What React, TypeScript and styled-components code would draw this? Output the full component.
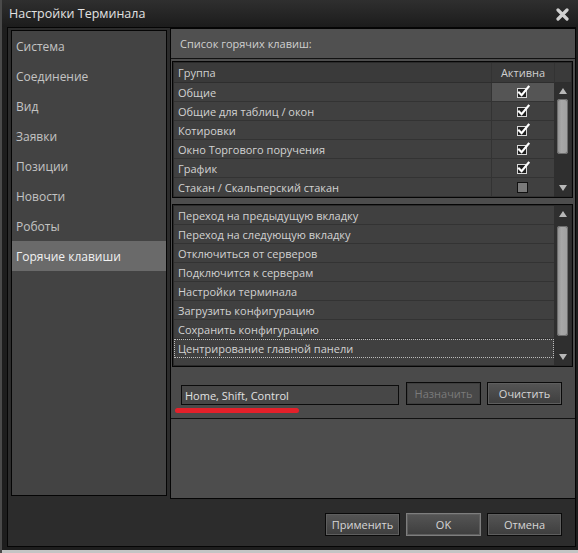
import React from "react";
import styled, { createGlobalStyle } from "styled-components";

const Global = createGlobalStyle`
  html, body { margin: 0; padding: 0; background: #bdbdbd; }
  body { font-family: "Open Sans", "Liberation Sans", sans-serif; }
  * { box-sizing: border-box; }
`;

const Window = styled.div`
  width: 578px;
  height: 553px;
  background: #1d1d1d;
  border-left: 2px solid #4a4a4a;
  display: flex;
  flex-direction: column;
  overflow: hidden;
`;

const TitleBar = styled.div`
  height: 27px;
  flex: none;
  display: flex;
  align-items: center;
  justify-content: space-between;
  padding: 0 9px 0 7px;
  background: linear-gradient(#2f2f2f, #1c1c1c);
  color: #e2e2e2;
  font-size: 12.5px;
`;

const CloseIcon = styled.svg`
  width: 13px;
  height: 13px;
  margin-top: 1px;
`;

const Frame = styled.div`
  height: 520px;
  flex: none;
  margin: 0 2px 0 5px;
  border: 1px solid #050505;
  background: #2c2c2c;
  display: flex;
  flex-direction: column;
`;

const BottomGap = styled.div`
  height: 3px;
  flex: none;
`;

const BottomStrip = styled.div`
  height: 3px;
  flex: none;
  background: #c4c4c4;
  margin-left: -2px;
`;

const Body = styled.div`
  height: 471px;
  flex: none;
  display: flex;
  gap: 3px;
  padding-left: 3px;
`;

const Sidebar = styled.div`
  width: 156px;
  height: 466px;
  margin-top: 2px;
  border: 1px solid #050505;
  background: #434343;
  display: flex;
  flex-direction: column;
`;

const NavItem = styled.div<{ $active?: boolean }>`
  height: 30px;
  flex: none;
  display: flex;
  align-items: center;
  padding-left: 4px;
  font-size: 12px;
  color: ${(p) => (p.$active ? "#f2f2f2" : "#c4c4c4")};
  background: ${(p) => (p.$active ? "#6a6a6a" : "transparent")};
`;

const RightPanel = styled.div`
  flex: 1;
  border: 1px solid #050505;
  border-right: none;
  background: #4d4d4d;
  display: flex;
  flex-direction: column;
`;

const PanelHeader = styled.div`
  height: 30px;
  flex: none;
  display: flex;
  align-items: center;
  padding-left: 9px;
  background: #505050;
  border-bottom: 1px solid #111;
  color: #cfcfcf;
  font-size: 11px;
`;

const TableBox = styled.div<{ $h: number; $mt: number }>`
  height: ${(p) => p.$h}px;
  margin: ${(p) => p.$mt}px 2px 0 1px;
  flex: none;
  border: 1px solid #050505;
  padding: 1px;
  background: #2a2a2a;
  display: flex;
`;

const TableBody = styled.div`
  flex: 1;
  display: flex;
  flex-direction: column;
  background: #404040;
  min-width: 0;
`;

const HeadRow = styled.div`
  height: 20px;
  flex: none;
  display: flex;
  background: #3a3a3a;
  border-bottom: 1px solid #2e2e2e;
  color: #cfcfcf;
  font-size: 11px;
`;

const Row = styled.div<{ $focus?: boolean }>`
  height: 19px;
  flex: none;
  display: flex;
  align-items: stretch;
  background: #404040;
  border-bottom: 1px solid ${(p) => (p.$focus ? "transparent" : "#333")};
  outline: ${(p) => (p.$focus ? "1px dotted #bdbdbd" : "none")};
  outline-offset: -1px;
  color: #d2d2d2;
  font-size: 11px;
`;

const NameCell = styled.div`
  flex: 1;
  display: flex;
  align-items: center;
  padding-left: 4px;
  white-space: nowrap;
`;

const CheckCell = styled.div<{ $sel?: boolean }>`
  width: 63px;
  flex: none;
  display: flex;
  align-items: center;
  justify-content: center;
  border-left: 1px solid #333;
  background: ${(p) => (p.$sel ? "#555555" : "transparent")};
`;

const Scroll = styled.div`
  width: 17px;
  flex: none;
  background: #2f2f2f;
  display: flex;
  flex-direction: column;
  align-items: center;
`;

const ScrollHeadCell = styled.div`
  height: 20px;
  width: 100%;
  flex: none;
  background: #3a3a3a;
  border-bottom: 1px solid #2e2e2e;
  border-left: 1px solid #333;
`;

const Arrow = styled.div<{ $down?: boolean }>`
  width: 0;
  height: 0;
  flex: none;
  border-left: 4px solid transparent;
  border-right: 4px solid transparent;
  ${(p) =>
    p.$down
      ? "border-top: 6px solid #b8b8b8; margin-bottom: 5px;"
      : "border-bottom: 6px solid #b8b8b8; margin-top: 5px;"}
`;

const Thumb = styled.div<{ $h: number; $mt: number }>`
  width: 11px;
  height: ${(p) => p.$h}px;
  margin-top: ${(p) => p.$mt}px;
  flex: none;
  border-radius: 3px;
  background: linear-gradient(90deg, #8e8e8e, #a8a8a8 40%, #a0a0a0);
  box-shadow: inset 0 0 0 1px #6e6e6e;
`;

const Spacer = styled.div`
  flex: 1;
`;

const HotkeyArea = styled.div`
  height: 52px;
  flex: none;
  display: flex;
  align-items: flex-start;
  gap: 6px;
  padding: 15px 0 0 10px;
  border-bottom: 1px solid #111;
  background: #4a4a4a;
`;

const KeyField = styled.div`
  position: relative;
  width: 218px;
  height: 20px;
  margin-top: 3px;
  margin-right: 1px;
  border: 1px solid #0c0c0c;
  background: #474747;
  color: #e2e2e2;
  font-size: 11px;
  display: flex;
  align-items: center;
  padding-left: 3px;
  &::after {
    content: "";
    position: absolute;
    left: -7px;
    top: 22px;
    width: 124px;
    height: 5px;
    border-radius: 3px;
    background: #e4202a;
  }
`;

const Btn = styled.button<{ $disabled?: boolean; $def?: boolean }>`
  width: 75px;
  height: 23px;
  padding: 0;
  font-family: inherit;
  font-size: 11px;
  color: ${(p) => (p.$disabled ? "#7a7a7a" : "#d6d6d6")};
  border: 1px solid ${(p) => (p.$def ? "#7e7e7e" : "#0a0a0a")};
  background: ${(p) =>
    p.$disabled ? "#484848" : "linear-gradient(#555555, #3e3e3e)"};
  box-shadow: ${(p) =>
    p.$disabled ? "inset 0 0 0 1px #3e3e3e" : "inset 0 0 0 1px #5e5e5e"};
`;

const Footer = styled.div`
  flex: 1;
  display: flex;
  justify-content: flex-end;
  align-items: flex-start;
  gap: 6px;
  padding: 14px 13px 0 0;
`;

const CheckIcon = ({ on }: { on: boolean }) => (
  <svg width="14" height="14" viewBox="0 0 14 14">
    <rect
      x={1.5}
      y={on ? 3.5 : 2.5}
      width={on ? 9 : 10}
      height={on ? 9 : 10}
      fill={on ? "#202020" : "#7a7a7a"}
      stroke={on ? "#d8d8d8" : "#111"}
      strokeWidth="1"
    />
    {on && (
      <path
        d="M3 7.5 L5.6 10.2 L12.5 1.8"
        fill="none"
        stroke="#ffffff"
        strokeWidth="2.2"
        strokeLinecap="square"
      />
    )}
  </svg>
);

const groups: [string, boolean][] = [
  ["Общие", true],
  ["Общие для таблиц / окон", true],
  ["Котировки", true],
  ["Окно Торгового поручения", true],
  ["График", true],
  ["Стакан / Скальперский стакан", false],
];

const actions = [
  "Переход на предыдущую вкладку",
  "Переход на следующую вкладку",
  "Отключиться от серверов",
  "Подключится к серверам",
  "Настройки терминала",
  "Загрузить конфигурацию",
  "Сохранить конфигурацию",
  "Центрирование главной панели",
];

const nav = [
  "Система",
  "Соединение",
  "Вид",
  "Заявки",
  "Позиции",
  "Новости",
  "Роботы",
  "Горячие клавиши",
];

export default function App() {
  return (
    <>
      <Global />
      <Window>
        <TitleBar>
          <span>Настройки Терминала</span>
          <CloseIcon viewBox="0 0 13 13">
            <path
              d="M2 2 L11 11 M11 2 L2 11"
              stroke="#d0d0d0"
              strokeWidth="3.2"
              strokeLinecap="round"
            />
          </CloseIcon>
        </TitleBar>
        <Frame>
          <Body>
            <Sidebar>
              {nav.map((n, i) => (
                <NavItem key={n} $active={i === nav.length - 1}>
                  {n}
                </NavItem>
              ))}
            </Sidebar>
            <RightPanel>
              <PanelHeader>Список горячих клавиш:</PanelHeader>
              <TableBox $h={137} $mt={2}>
                <TableBody>
                  <HeadRow>
                    <NameCell>Группа</NameCell>
                    <CheckCell>Активна</CheckCell>
                  </HeadRow>
                  {groups.map(([g, on], i) => (
                    <Row key={g}>
                      <NameCell>{g}</NameCell>
                      <CheckCell $sel={i === 0}>
                        <CheckIcon on={on} />
                      </CheckCell>
                    </Row>
                  ))}
                </TableBody>
                <Scroll>
                  <ScrollHeadCell />
                  <Arrow />
                  <Thumb $h={55} $mt={5} />
                  <Spacer />
                  <Arrow $down />
                </Scroll>
              </TableBox>
              <TableBox $h={163} $mt={6}>
                <TableBody>
                  {actions.map((a, i) => (
                    <Row key={a} $focus={i === actions.length - 1}>
                      <NameCell>{a}</NameCell>
                    </Row>
                  ))}
                </TableBody>
                <Scroll>
                  <Arrow />
                  <Thumb $h={110} $mt={9} />
                  <Spacer />
                  <Arrow $down />
                </Scroll>
              </TableBox>
              <HotkeyArea>
                <KeyField>Home, Shift, Control</KeyField>
                <Btn $disabled>Назначить</Btn>
                <Btn>Очистить</Btn>
              </HotkeyArea>
            </RightPanel>
          </Body>
          <Footer>
            <Btn>Применить</Btn>
            <Btn $def>OK</Btn>
            <Btn>Отмена</Btn>
          </Footer>
        </Frame>
        <BottomGap />
        <BottomStrip />
      </Window>
    </>
  );
}
